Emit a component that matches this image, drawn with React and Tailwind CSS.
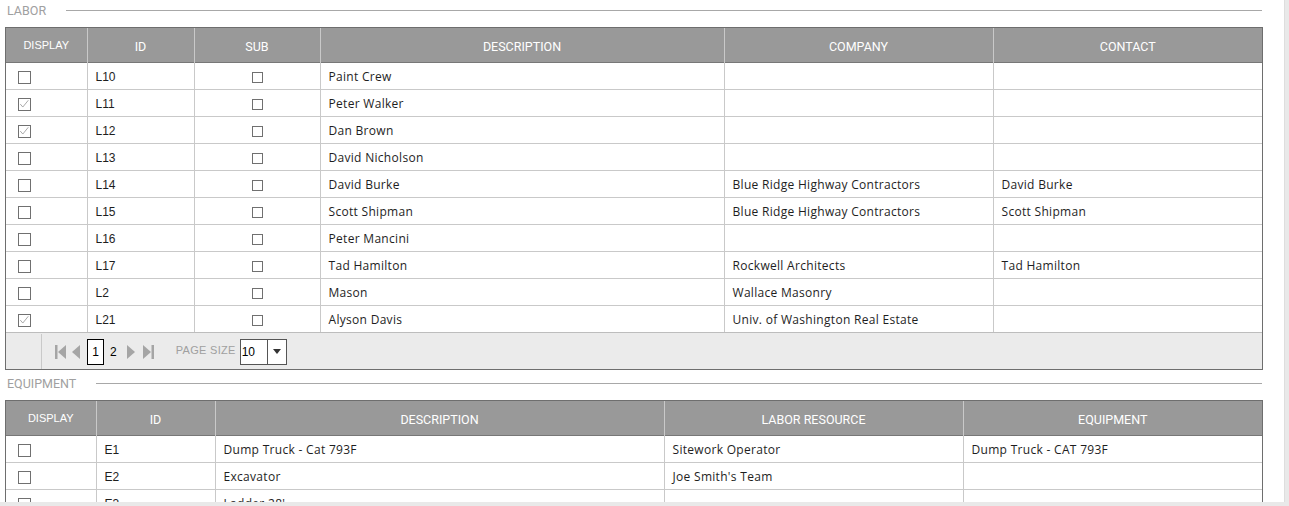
import React from "react";

const labor = [
  { d: false, id: "L10", desc: "Paint Crew", co: "", ct: "" },
  { d: true, id: "L11", desc: "Peter Walker", co: "", ct: "" },
  { d: true, id: "L12", desc: "Dan Brown", co: "", ct: "" },
  { d: false, id: "L13", desc: "David Nicholson", co: "", ct: "" },
  { d: false, id: "L14", desc: "David Burke", co: "Blue Ridge Highway Contractors", ct: "David Burke" },
  { d: false, id: "L15", desc: "Scott Shipman", co: "Blue Ridge Highway Contractors", ct: "Scott Shipman" },
  { d: false, id: "L16", desc: "Peter Mancini", co: "", ct: "" },
  { d: false, id: "L17", desc: "Tad Hamilton", co: "Rockwell Architects", ct: "Tad Hamilton" },
  { d: false, id: "L2", desc: "Mason", co: "Wallace Masonry", ct: "" },
  { d: true, id: "L21", desc: "Alyson Davis", co: "Univ. of Washington Real Estate", ct: "" },
];

const equip = [
  { id: "E1", desc: "Dump Truck - Cat 793F", lr: "Sitework Operator", eq: "Dump Truck - CAT 793F" },
  { id: "E2", desc: "Excavator", lr: "Joe Smith's Team", eq: "" },
  { id: "E3", desc: "Ladder 28'", lr: "", eq: "" },
];

const body = { fontFamily: '"Open Sans", "DejaVu Sans", sans-serif' };
const arial = { fontFamily: '"Liberation Sans", Arial, sans-serif' };
const head = { fontFamily: 'Roboto, "Liberation Sans", sans-serif' };

function Box({ checked, size = 13 }) {
  return (
    <span
      className="inline-block border border-[#707070] bg-white relative align-middle"
      style={{ width: size, height: size }}
    >
      {checked && (
        <svg viewBox="0 0 13 13" className="absolute inset-0 w-full h-full">
          <path d="M1.5 6 L4.5 9.5 L11 1.5" fill="none" stroke="#9a9a9a" strokeWidth="1" />
        </svg>
      )}
    </span>
  );
}

function Title({ children }) {
  return (
    <div className="flex items-center h-[21px] pl-[7px] pr-[22px]">
      <span className="text-[12.5px] text-[#a0a0a0] mr-[20px] relative top-[1px]" style={head}>
        {children}
      </span>
      <div className="flex-1 h-px bg-[#a8a8a8]" />
    </div>
  );
}

const th = "bg-[#999999] text-white text-[12.5px] font-normal h-[34px] pt-[5px] pb-0 border-l border-[#c9c9c9] first:border-l-0 align-middle text-center";
const td = "h-[27px] pt-[2px] pb-0 border-t border-l border-[#c9c9c9] first:border-l-0 text-[12px] text-[#1e1e1e] pl-[8px] pr-[7px] align-middle whitespace-nowrap";

function Tri({ dir }) {
  return (
    <svg width="9" height="14" viewBox="0 0 9 14">
      {dir === "l" ? <path d="M8 0 L8 14 L0 7 Z" fill="#a5a5a5" /> : <path d="M0 0 L0 14 L8 7 Z" fill="#a5a5a5" />}
    </svg>
  );
}

function DisplayTh() {
  return (
    <th className={th}>
      <span className="relative -top-[2px] text-[11px]" style={arial}>DISPLAY</span>
    </th>
  );
}

export default function App() {
  return (
    <div className="w-[1289px] h-[506px] overflow-hidden bg-[#e9e9e9] flex flex-col">
      <div className="w-[1285px] h-[502px] bg-white overflow-hidden border-r border-[#dedede]">
        <div>
          <Title>LABOR</Title>
          <div className="mt-[6px] ml-[5px] w-[1258px] border border-[#6e6e6e]">
            <table className="w-full border-collapse table-fixed">
              <colgroup>
                <col style={{ width: 81 }} />
                <col style={{ width: 107 }} />
                <col style={{ width: 126 }} />
                <col style={{ width: 404 }} />
                <col style={{ width: 269 }} />
                <col />
              </colgroup>
              <thead style={head}>
                <tr className="border-b border-[#777]">
                  <DisplayTh />
                  <th className={th}>ID</th>
                  <th className={th}>SUB</th>
                  <th className={th}>DESCRIPTION</th>
                  <th className={th}>COMPANY</th>
                  <th className={th}>CONTACT</th>
                </tr>
              </thead>
              <tbody>
                {labor.map((r, i) => (
                  <tr key={r.id} className={i === 0 ? "[&>td]:border-t-0" : ""}>
                    <td className={td + " pl-[12px]"}><Box checked={r.d} /></td>
                    <td className={td} style={arial}>{r.id}</td>
                    <td className={td + " text-center"}><Box size={11} /></td>
                    <td className={td + " tracking-[0.3px]"} style={body}>{r.desc}</td>
                    <td className={td + " tracking-[0.3px]"} style={body}>{r.co}</td>
                    <td className={td + " tracking-[0.3px]"} style={body}>{r.ct}</td>
                  </tr>
                ))}
              </tbody>
            </table>
            <div className="flex items-center h-[37px] bg-[#ebebeb] border-t border-[#bdbdbd] pt-[1px]">
              <div className="w-[36px] h-full border-r border-[#c9c9c9]" />
              <div className="flex items-center ml-[13px]" style={arial}>
                <svg width="12" height="16" viewBox="0 0 12 16" className="mr-[5px]">
                  <rect x="0" y="1" width="2.5" height="14" fill="#a5a5a5" />
                  <path d="M11 1 L11 15 L3 8 Z" fill="#a5a5a5" />
                </svg>
                <Tri dir="l" />
                <span className="ml-[6px] w-[17px] h-[26px] border border-black flex items-center justify-center text-[12px] text-black bg-white">1</span>
                <span className="ml-[6px] text-[12px] text-black">2</span>
                <span className="ml-[10px]"><Tri dir="r" /></span>
                <svg width="12" height="16" viewBox="0 0 12 16" className="ml-[6px]">
                  <path d="M1 1 L1 15 L9 8 Z" fill="#a5a5a5" />
                  <rect x="9.5" y="1" width="2.5" height="14" fill="#a5a5a5" />
                </svg>
                <span className="ml-[22px] text-[11px] text-[#a0a0a0] tracking-[0.3px] -mt-[3px]">PAGE SIZE</span>
                <div className="ml-[4px] w-[47px] h-[26px] border border-[#555] bg-white flex">
                  <span className="flex-1 text-[12px] text-black pt-[6px] pl-[1px] leading-none">10</span>
                  <span className="w-[19px] border-l border-[#555] flex items-center justify-center">
                    <svg width="8" height="5" viewBox="0 0 8 5"><path d="M0 0 L8 0 L4 5 Z" fill="#333" /></svg>
                  </span>
                </div>
              </div>
            </div>
          </div>

          <div className="mt-[3px]">
            <Title>EQUIPMENT</Title>
          </div>
          <div className="mt-[6px] ml-[5px] w-[1258px] border border-[#6e6e6e]">
            <table className="w-full border-collapse table-fixed">
              <colgroup>
                <col style={{ width: 90 }} />
                <col style={{ width: 119 }} />
                <col style={{ width: 449 }} />
                <col style={{ width: 299 }} />
                <col />
              </colgroup>
              <thead style={head}>
                <tr className="border-b border-[#777]">
                  <DisplayTh />
                  <th className={th}>ID</th>
                  <th className={th}>DESCRIPTION</th>
                  <th className={th}>LABOR RESOURCE</th>
                  <th className={th}>EQUIPMENT</th>
                </tr>
              </thead>
              <tbody>
                {equip.map((r, i) => (
                  <tr key={r.id} className={i === 0 ? "[&>td]:border-t-0" : ""}>
                    <td className={td + " pl-[12px]"}><Box /></td>
                    <td className={td} style={arial}>{r.id}</td>
                    <td className={td + " tracking-[0.3px]"} style={body}>{r.desc}</td>
                    <td className={td + " tracking-[0.3px]"} style={body}>{r.lr}</td>
                    <td className={td + " tracking-[0.3px]"} style={body}>{r.eq}</td>
                  </tr>
                ))}
              </tbody>
            </table>
          </div>
        </div>
      </div>
    </div>
  );
}
